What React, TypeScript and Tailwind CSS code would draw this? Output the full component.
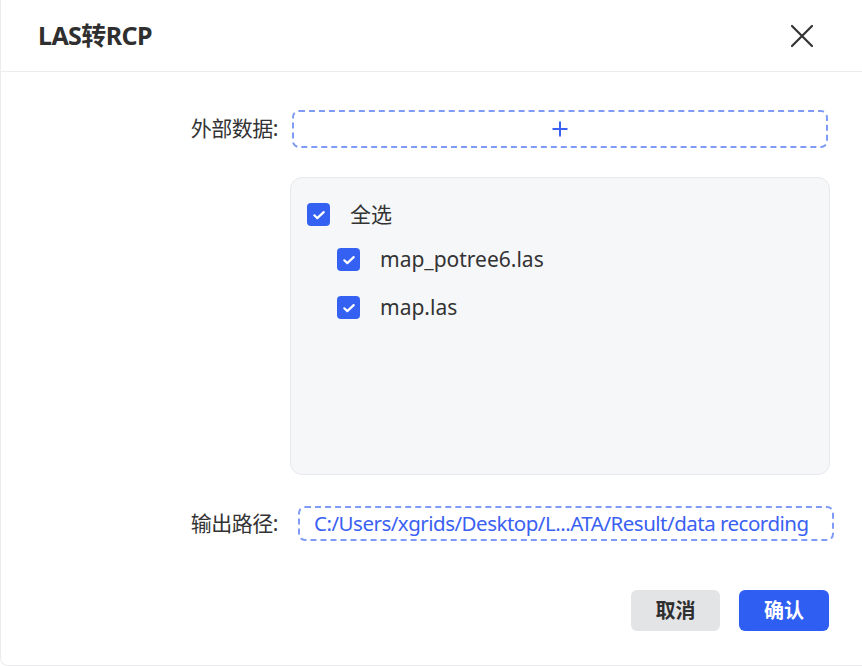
import React, { useState } from "react";

const FONT = { fontFamily: '"Noto Sans", "Noto Sans CJK SC", sans-serif' };

const FILES = ["map_potree6.las", "map.las"];

const CheckBox: React.FC<{ checked: boolean; onChange: () => void }> = ({ checked, onChange }) => (
  <button
    onClick={onChange}
    className={`w-[23px] h-[23px] rounded-[4px] flex items-center justify-center shrink-0 ${
      checked ? "bg-[#3461f2]" : "bg-white border border-[#c8cbd0]"
    }`}
  >
    {checked && (
      <svg width="14" height="14" viewBox="0 0 14 14" fill="none">
        <path d="M2.3 7.3l3 2.8 6.4-6" stroke="#fff" strokeWidth="2.2" strokeLinecap="round" strokeLinejoin="round" />
      </svg>
    )}
  </button>
);

export default function App() {
  const [checked, setChecked] = useState<Record<string, boolean>>({ "map_potree6.las": true, "map.las": true });
  const all = FILES.every((f) => checked[f]);
  const toggleAll = () => {
    const next: Record<string, boolean> = {};
    FILES.forEach((f) => (next[f] = !all));
    setChecked(next);
  };

  return (
    <div className="w-[862px] h-[666px] bg-white border-l border-b border-[#ececef] rounded-bl-[8px] flex flex-col text-[#333]" style={FONT}>
      {/* Header */}
      <div className="h-[72px] shrink-0 flex items-center justify-between pl-[37px] pr-[47px] border-b border-[#ededed]">
        <span className="text-[25px] font-bold text-[#2f2f2f] tracking-[-0.6px]">LAS转RCP</span>
        <button className="w-[26px] h-[26px] flex items-center justify-center">
          <svg width="24" height="24" viewBox="0 0 24 24" fill="none">
            <path d="M2 2l20 20M22 2L2 22" stroke="#333" strokeWidth="2.2" strokeLinecap="round" />
          </svg>
        </button>
      </div>

      {/* Body */}
      <div className="flex-1 flex flex-col pt-[38px]">
        <div className="flex items-center">
          <div className="w-[291px] text-right text-[21px] text-[#333] pr-[14px] tracking-[-0.5px]">外部数据:</div>
          <button className="w-[536px] h-[38px] border-2 border-dashed border-[#7f9bf6] rounded-[7px] flex items-center justify-center">
            <svg width="18" height="18" viewBox="0 0 18 18" fill="none">
              <path d="M9 1.5v15M1.5 9h15" stroke="#3a61f2" strokeWidth="2" />
            </svg>
          </button>
        </div>

        <div className="ml-[289px] mt-[29px] w-[540px] h-[298px] bg-[#f6f7f9] border border-[#e8e9ec] rounded-[12px] pl-[16px] pt-[25px]">
          <div className="flex items-center gap-[20px] h-[23px]">
            <CheckBox checked={all} onChange={toggleAll} />
            <span className="text-[21px] text-[#333]">全选</span>
          </div>
          <div className="pl-[30px] mt-[22px] flex flex-col gap-[25px]">
            {FILES.map((f) => (
              <div key={f} className="flex items-center gap-[20px] h-[23px]">
                <CheckBox checked={!!checked[f]} onChange={() => setChecked((p) => ({ ...p, [f]: !p[f] }))} />
                <span className="text-[21px] text-[#333]">{f}</span>
              </div>
            ))}
          </div>
        </div>

        <div className="flex items-center mt-[31px]">
          <div className="w-[291px] text-right text-[21px] text-[#333] pr-[14px] tracking-[-0.5px]">输出路径:</div>
          <div className="ml-[6px] w-[536px] h-[35px] border-2 border-dashed border-[#7f9bf6] rounded-[7px] flex items-center pl-[14px] overflow-hidden">
            <span className="text-[20.5px] text-[#3a61f2] whitespace-nowrap tracking-[-0.5px]">C:/Users/xgrids/Desktop/L...ATA/Result/data recording</span>
          </div>
        </div>

        <div className="flex justify-end gap-[19px] pr-[33px] mt-[49px]">
          <button className="w-[89px] h-[41px] rounded-[6px] bg-[#e3e4e6] text-[20px] font-bold text-[#2f2f2f]">取消</button>
          <button className="w-[90px] h-[41px] rounded-[6px] bg-[#2f5ff2] text-[20px] font-bold text-white">确认</button>
        </div>
      </div>
    </div>
  );
}
